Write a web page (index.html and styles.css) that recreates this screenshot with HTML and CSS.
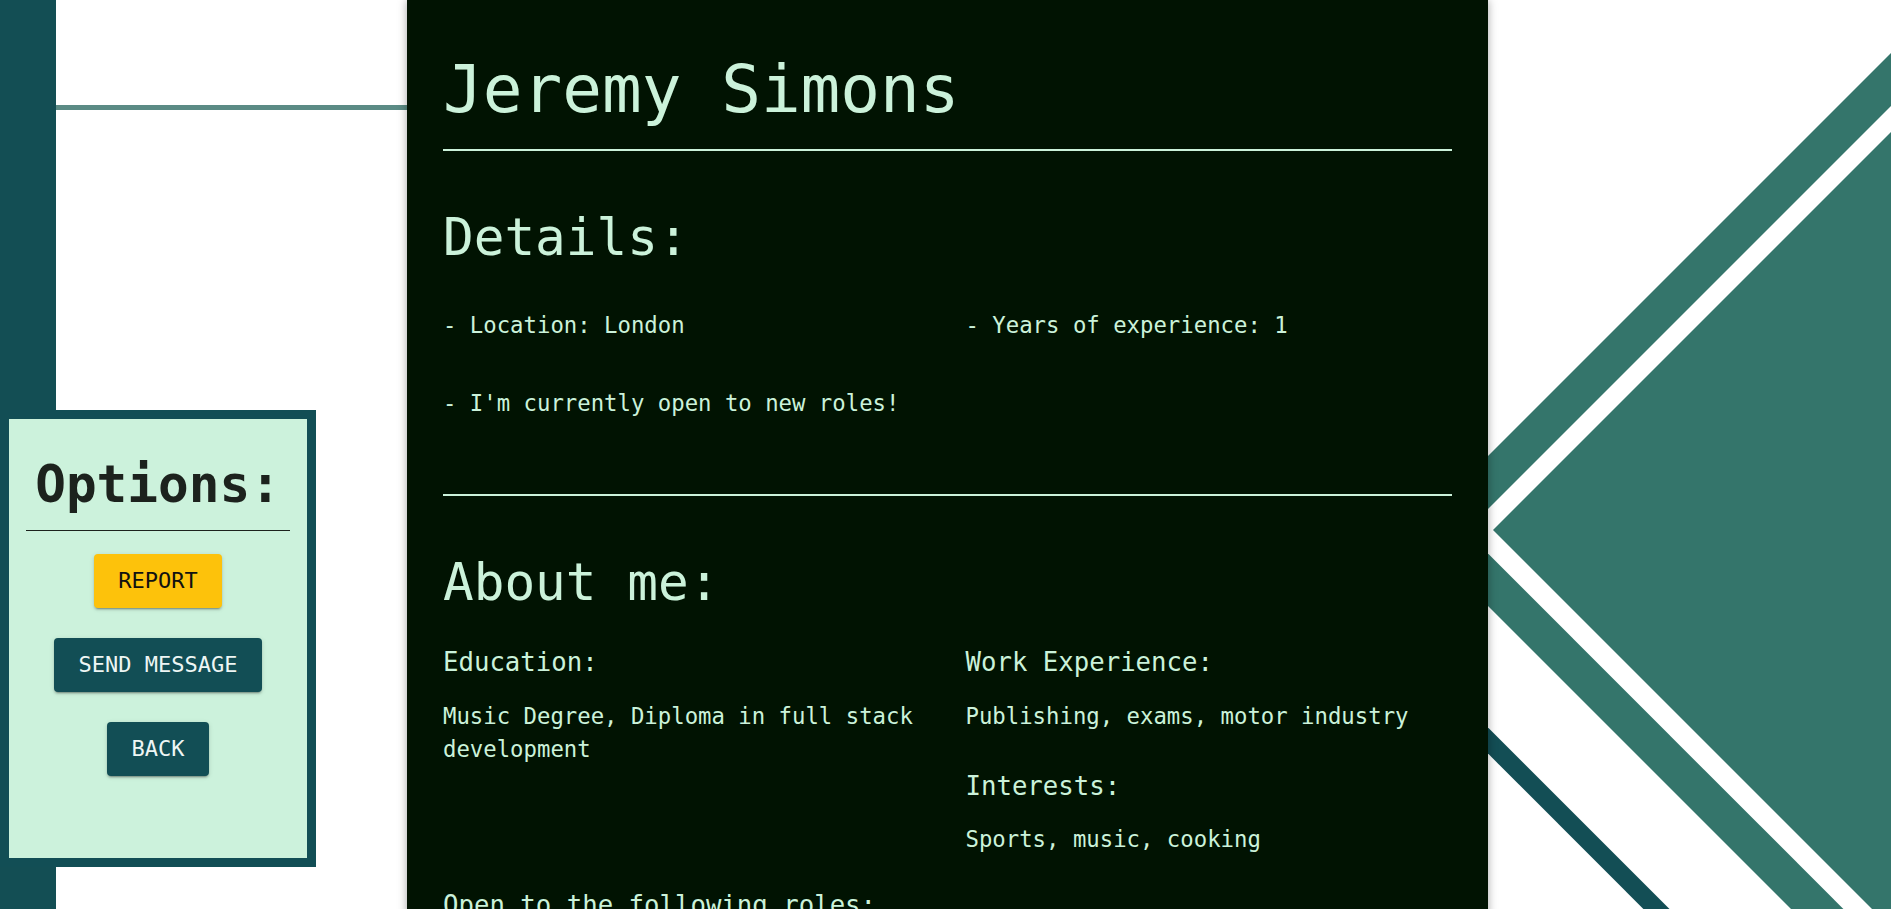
FILE: index.html
```html
<!DOCTYPE html>
<html lang="en">
<head>
<meta charset="utf-8">
<title>Jeremy Simons</title>
<link rel="stylesheet" href="styles.css">
</head>
<body>
<div class="page">
  <aside class="side">
    <div class="options">
      <h2 class="options-title">Options:</h2>
      <hr class="options-rule">
      <div class="actions">
        <button class="btn btn-warn">REPORT</button>
        <button class="btn btn-dark">SEND MESSAGE</button>
        <button class="btn btn-dark">BACK</button>
      </div>
    </div>
  </aside>

  <main class="profile">
    <h1 class="name">Jeremy Simons</h1>
    <hr class="rule rule-name">

    <section class="details-section">
      <h2 class="section-title">Details:</h2>
      <div class="details">
        <p class="line">- Location: London</p>
        <p class="line">- Years of experience: 1</p>
        <p class="line">- I'm currently open to new roles!</p>
      </div>
    </section>

    <hr class="rule rule-section">

    <section class="about-section">
      <h2 class="section-title">About me:</h2>
      <div class="about">
        <div class="col">
          <div class="item">
            <h3 class="sub">Education:</h3>
            <p class="line">Music Degree, Diploma in full stack development</p>
          </div>
        </div>
        <div class="col">
          <div class="item">
            <h3 class="sub">Work Experience:</h3>
            <p class="line">Publishing, exams, motor industry</p>
          </div>
          <div class="item">
            <h3 class="sub">Interests:</h3>
            <p class="line">Sports, music, cooking</p>
          </div>
        </div>
      </div>
      <h3 class="sub roles-title">Open to the following roles:</h3>
    </section>
  </main>

  <div class="deco">
    <svg class="deco-svg" viewBox="0 0 403 909" preserveAspectRatio="none" aria-hidden="true">
      <polygon class="teal" points="-75,531 456,0 520,0 520,909 303,909"/>
      <polygon class="gap" points="-22.3,531.3 509,0 540,0 540,909 355.4,909"/>
      <polygon class="teal" points="5,530 535,0 560,0 560,909 384,909"/>
      <polygon class="darkline" points="-30,697.5 181.5,909 155.4,909 -30,723.6"/>
    </svg>
  </div>
</div>
</body>
</html>
```

FILE: styles.css
```css
* {
  box-sizing: border-box;
}

html, body {
  margin: 0;
  padding: 0;
  background: #ffffff;
}

body {
  font-family: "DejaVu Sans Mono", "Liberation Mono", monospace;
}

.page {
  display: grid;
  grid-template-columns: 407px 1081px 1fr;
  height: 100vh;
  overflow: hidden;
}

/* ---------- left side ---------- */
.side {
  background:
    linear-gradient(#5b8b85, #5b8b85) 56px 105px / 351px 5px no-repeat,
    linear-gradient(to right, #134e54 0, #134e54 56px, #ffffff 56px) 0 0 / 100% 100% no-repeat;
}

.options {
  margin-top: 410px;
  width: 316px;
  border: 9px solid #124e55;
  background: #ccf2dc;
  padding: 34.5px 17px 82px;
}

.options-title {
  margin: 0;
  font-size: 51px;
  line-height: 1.2;
  font-weight: 700;
  color: #1c221d;
  text-align: center;
}

.options-rule {
  margin: 15px 0 0;
  border: 0;
  height: 1px;
  background: #1c221d;
}

.actions {
  margin-top: 23px;
  display: flex;
  flex-direction: column;
  align-items: center;
  gap: 30px;
}

.btn {
  height: 54px;
  padding: 0 24.5px;
  border: 0;
  border-radius: 4px;
  font-family: "DejaVu Sans Mono", "Liberation Mono", monospace;
  font-size: 22px;
  line-height: 1;
  display: flex;
  align-items: center;
  justify-content: center;
  box-shadow: 0 3px 1px -2px rgba(0,0,0,0.2), 0 2px 2px 0 rgba(0,0,0,0.14), 0 1px 5px 0 rgba(0,0,0,0.12);
  cursor: pointer;
}

.btn-warn {
  background: #fdc20b;
  color: #111111;
}

.btn-dark {
  background: #124e55;
  color: #eef6f4;
}

/* ---------- main profile ---------- */
.profile {
  position: relative;
  z-index: 1;
  background: #011302;
  color: #cbf2da;
  padding: 50px 36px 120px;
  box-shadow: 0 0 9px rgba(0,0,0,0.35);
}

.name {
  margin: 0;
  font-size: 66px;
  line-height: 1.2;
  font-weight: 400;
}

.rule {
  border: 0;
  height: 2px;
  margin: 0;
  background: #cbf2da;
}

.rule-name {
  margin-top: 20px;
}

.rule-section {
  margin-top: 75px;
}

.section-title {
  margin: 56px 0 0;
  font-size: 51px;
  line-height: 1.2;
  font-weight: 400;
}

.line {
  margin: 0;
  font-size: 22.3px;
  line-height: 32.4px;
}

.details {
  margin-top: 41px;
  display: grid;
  grid-template-columns: 1fr 1fr;
  column-gap: 36px;
  row-gap: 45px;
}

.about {
  margin-top: 34px;
  display: grid;
  grid-template-columns: 1fr 1fr;
  column-gap: 36px;
}

.col {
  display: flex;
  flex-direction: column;
  gap: 38px;
}

.sub {
  margin: 0 0 22px;
  font-size: 25.7px;
  line-height: 1.2;
  font-weight: 400;
}

.roles-title {
  margin-top: 34px;
}

/* ---------- right decoration ---------- */
.deco {
  background: #ffffff;
}

.deco-svg {
  display: block;
  width: 100%;
  height: 100vh;
}

.teal {
  fill: #34756b;
}

.gap {
  fill: #ffffff;
}

.darkline {
  fill: #134e55;
}
```
